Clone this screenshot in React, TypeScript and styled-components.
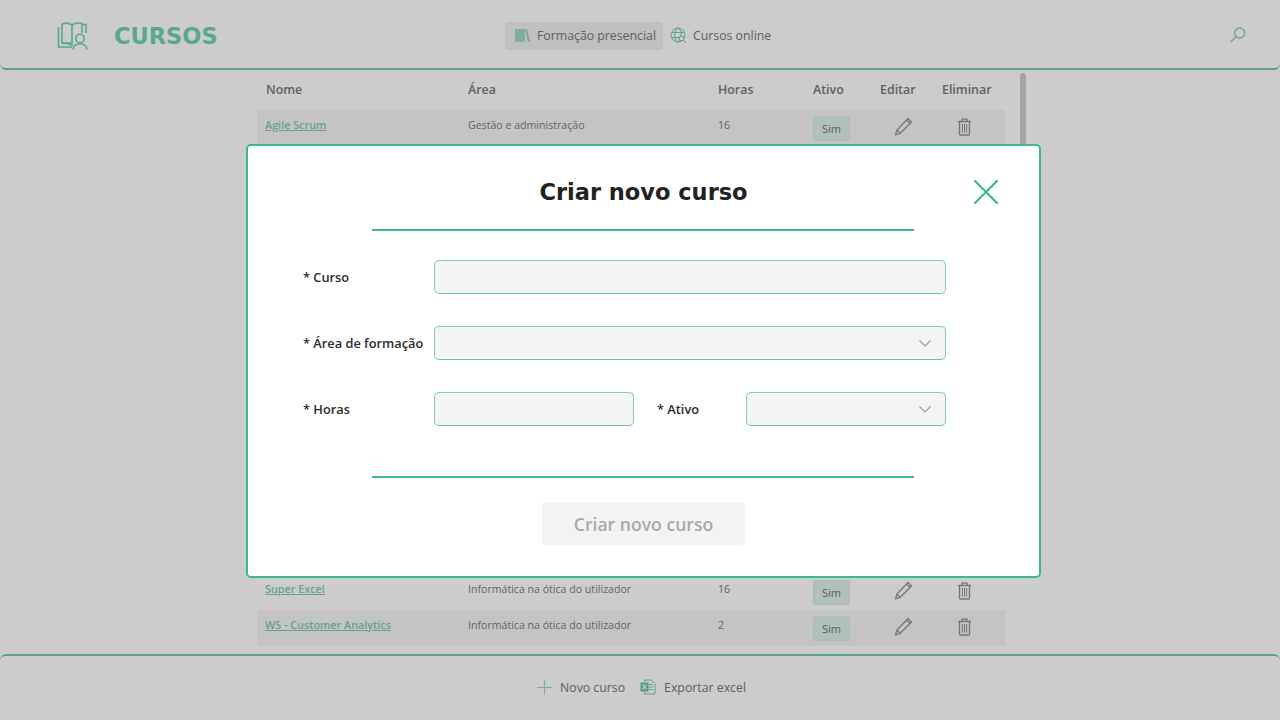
import React from "react";
import styled, { createGlobalStyle } from "styled-components";

const Global = createGlobalStyle`
  html, body { margin: 0; padding: 0; height: 100%; overflow: hidden; background: #fff; }
  * { box-sizing: border-box; }
  body { font-family: "Open Sans", "Noto Sans", sans-serif; }
`;

const Page = styled.div`
  width: 1280px;
  height: 720px;
  display: flex;
  flex-direction: column;
  background: #fff;
`;

const Header = styled.header`
  height: 70px;
  flex: none;
  display: grid;
  grid-template-columns: 505px auto 1fr;
  align-items: center;
  padding-top: 3px;
  border-bottom: 2px solid #79c9ab;
  border-radius: 0 0 6px 6px;
`;

const Brand = styled.div`
  display: flex;
  align-items: center;
  padding-left: 57px;
  gap: 25px;
`;

const BrandTitle = styled.h1`
  margin: 0;
  font-family: "DejaVu Sans", sans-serif;
  font-weight: 700;
  font-size: 22.5px;
  color: #70d2ae;
`;

const Nav = styled.nav`
  display: flex;
  align-items: center;
  gap: 7px;
`;

const NavItem = styled.a<{ $active?: boolean }>`
  display: flex;
  align-items: center;
  gap: ${(p) => (p.$active ? 7 : 6)}px;
  height: 28px;
  padding: 0 ${(p) => (p.$active ? "7px 0 10px" : "6px 0 0")};
  border-radius: 3px;
  font-size: 12.3px;
  color: #777;
  background: ${(p) => (p.$active ? "#f0f0f0" : "transparent")};
`;

const SearchSlot = styled.div`
  display: flex;
  justify-content: flex-end;
  padding: 0 33px 1px 0;
`;

const Main = styled.main`
  flex: 1;
  display: flex;
  padding-left: 257px;
  min-height: 0;
`;

const Table = styled.div`
  width: 748px;
  display: flex;
  flex-direction: column;
`;

const columns = "grid-template-columns: 203px 250px 95px 67px 62px 1fr;";

const HeadRow = styled.div`
  display: grid;
  ${columns}
  height: 40px;
  padding: 0 0 2px 8px;
  align-items: center;
  font-size: 12.4px;
  font-weight: 600;
  color: #7a7a7a;
`;

const HeadName = styled.span`
  padding-left: 1px;
`;

const Row = styled.div<{ $shaded?: boolean }>`
  display: grid;
  ${columns}
  height: 36px;
  padding-left: 8px;
  align-items: center;
  font-size: 10.6px;
  color: #7d7d7d;
  background: ${(p) => (p.$shaded ? "#f5f5f5" : "transparent")};
`;

const TextCell = styled.span`
  margin-bottom: 6px;
`;

const HiddenRows = styled.div`
  height: 428px;
  flex: none;
`;

const CourseLink = styled.a`
  margin-bottom: 8px;
  color: #7ccdb0;
  font-size: 10.8px;
  font-weight: 600;
  text-decoration: underline;
`;

const Badge = styled.span`
  justify-self: start;
  width: 37px;
  height: 25px;
  display: flex;
  align-items: center;
  justify-content: center;
  background: #dcf2ec;
  border: 1px solid #d4ebe4;
  border-radius: 2px;
  font-size: 11px;
  color: #707070;
`;

const EditCell = styled.span`
  display: flex;
  padding-left: 14px;
  margin-bottom: 3px;
`;

const DeleteCell = styled.span`
  display: flex;
  padding-left: 15px;
  margin-bottom: 3px;
`;

const Scrollbar = styled.div`
  width: 6px;
  height: 100px;
  margin: 3px 0 0 15px;
  border-radius: 3px;
  background: #cdcdcd;
`;

const Footer = styled.footer`
  height: 66px;
  flex: none;
  display: flex;
  align-items: center;
  justify-content: center;
  gap: 15px;
  padding: 0 0 2px 3px;
  border-top: 2px solid #79c9ab;
  border-radius: 6px 6px 0 0;
`;

const FooterAction = styled.a`
  display: flex;
  align-items: center;
  gap: 8px;
  font-size: 12.3px;
  color: #777;
`;

const Overlay = styled.div`
  position: fixed;
  inset: 0;
  background: rgba(0, 0, 0, 0.2);
  display: flex;
  align-items: flex-start;
  justify-content: flex-start;
  padding: 144px 0 0 246px;
`;

const Modal = styled.section`
  position: relative;
  width: 795px;
  height: 434px;
  background: #fff;
  border: 2px solid #3cb88e;
  border-radius: 5px;
  display: flex;
  flex-direction: column;
  align-items: center;
`;

const ModalTitle = styled.h2`
  margin: 31px 0 0 0;
  height: 30px;
  line-height: 30px;
  font-family: "DejaVu Sans", sans-serif;
  font-size: 22.5px;
  font-weight: 700;
  color: #222;
`;

const CloseButton = styled.button`
  position: absolute;
  top: 32px;
  right: 39px;
  width: 28px;
  height: 28px;
  padding: 0;
  border: 0;
  background: none;
  display: flex;
`;

const Divider = styled.hr<{ $top: number }>`
  width: 542px;
  height: 2px;
  margin: ${(p) => p.$top}px 0 0 -2px;
  border: 0;
  flex: none;
  background: #3cb88e;
`;

const Form = styled.form`
  align-self: flex-start;
  margin: 29px 0 0 55px;
  width: 643px;
  display: flex;
  flex-direction: column;
  gap: 32px;
`;

const FieldRow = styled.div`
  display: flex;
  align-items: center;
  height: 34px;
`;

const Label = styled.label<{ $width: number; $indent?: number }>`
  flex: none;
  width: ${(p) => p.$width}px;
  padding-left: ${(p) => p.$indent ?? 0}px;
  font-size: 12.8px;
  font-weight: 600;
  color: #2b2b2b;
  white-space: nowrap;
`;

const TextField = styled.input<{ $width?: number }>`
  width: ${(p) => (p.$width ? `${p.$width}px` : "100%")};
  flex: ${(p) => (p.$width ? "none" : 1)};
  height: 34px;
  background: #f4f4f4;
  border: 1px solid #7dd0b3;
  border-bottom-color: #68c2a3;
  border-radius: 5px;
  outline: 0;
`;

const SelectField = styled.div<{ $width?: number }>`
  width: ${(p) => (p.$width ? `${p.$width}px` : "auto")};
  flex: ${(p) => (p.$width ? "none" : 1)};
  height: 34px;
  background: #f4f4f4;
  border: 1px solid #7dd0b3;
  border-bottom-color: #68c2a3;
  border-radius: 5px;
  display: flex;
  align-items: center;
  justify-content: flex-end;
  padding-right: 14px;
`;

const SubmitButton = styled.button`
  margin: 24px 0 0 0;
  width: 203px;
  height: 43px;
  flex: none;
  border: 0;
  border-radius: 4px;
  background: #f3f3f3;
  color: #a9a9a9;
  font-family: inherit;
  font-size: 17.6px;
  font-weight: 600;
`;

const LogoIcon = () => (
  <svg width="32" height="28" viewBox="0 0 32 28" fill="none" stroke="#70d2ae" strokeWidth="1.6">
    <path d="M5 2V21H14" />
    <path d="M1.5 5V25H15" />
    <path d="M5 2C8 0.8 12 1 15 3V23C12 21.5 8 21 5 21" />
    <path d="M15 3C18 1 22 0.8 25 1.5V11" />
    <path d="M25 2.5H29V11" />
    <circle cx="23" cy="16.5" r="4.2" />
    <path d="M16 27.5C16.5 24 19 21.8 23 21.8S29.5 24 30 27.5" />
  </svg>
);

const BooksIcon = () => (
  <svg width="15" height="13" viewBox="0 0 15 13" fill="#9bdacb" stroke="#82c8b6" strokeWidth="0.5">
    <rect x="0.5" y="0.5" width="2.6" height="12" />
    <rect x="4" y="0.5" width="2.6" height="12" />
    <rect x="7.5" y="0.5" width="2" height="12" />
    <path d="M10.4 0.8L11.8 0.5L14.6 12.2L13.2 12.5Z" />
  </svg>
);

const GlobeIcon = () => (
  <svg width="17" height="17" viewBox="0 0 17 17" fill="none" stroke="#78cdad" strokeWidth="1">
    <circle cx="8" cy="8" r="7" />
    <ellipse cx="8" cy="8" rx="3.2" ry="7" />
    <path d="M1.5 5.5H14.5M1.5 10.5H9" />
    <circle cx="11.5" cy="11.5" r="2.4" fill="#fff" stroke="#6ab4c4" />
    <path d="M13.3 13.3L16 16" stroke="#6ab4c4" />
  </svg>
);

const SearchIcon = () => (
  <svg width="18" height="18" viewBox="0 0 18 18" fill="none" stroke="#8fd3c0" strokeWidth="1.5">
    <circle cx="10.7" cy="7" r="5" />
    <path d="M7 10.7L1.5 16.2" />
  </svg>
);

const PencilIcon = () => (
  <svg width="19" height="19" viewBox="0 0 19 19" fill="none" stroke="#929292" strokeWidth="1.2" strokeLinejoin="round">
    <path d="M14 1.5L17.5 5L6 16.5L1.5 18L3 13Z" />
    <path d="M12.5 3L16 6.5" />
    <path d="M3 13L6 16.5" />
  </svg>
);

const TrashIcon = () => (
  <svg width="15" height="18" viewBox="0 0 15 18" fill="none" stroke="#929292" strokeWidth="1.3">
    <path d="M1 3.5H14" />
    <path d="M5 3.5V1.2H10V3.5" />
    <path d="M2.5 3.5V16C2.5 16.6 3 17 3.5 17H11.5C12 17 12.5 16.6 12.5 16V3.5" />
    <path d="M5.4 6V14.6M7.5 6V14.6M9.6 6V14.6" strokeWidth="1" />
  </svg>
);

const PlusIcon = () => (
  <svg width="15" height="15" viewBox="0 0 15 15" stroke="#9ddcc5" strokeWidth="1.2">
    <path d="M7.5 0V15M0 7.5H15" />
  </svg>
);

const ExcelIcon = () => (
  <svg width="16" height="16" viewBox="0 0 16 16" fill="none">
    <path d="M4.5 2.5V1H11L15 4.5V15H4.5V13" stroke="#77c9a9" />
    <path d="M8.5 5.5H13M8.5 8H13M8.5 10.5H13" stroke="#77c9a9" />
    <rect x="0.5" y="3.5" width="8" height="9" fill="#6cc4a0" />
    <path d="M2.5 5.6L6.5 10.4M6.5 5.6L2.5 10.4" stroke="#fff" strokeWidth="1.1" />
  </svg>
);

const CloseIcon = () => (
  <svg width="28" height="28" viewBox="0 0 28 28" stroke="#3cb88e" strokeWidth="2.2" strokeLinecap="round">
    <path d="M3 3L25 25M25 3L3 25" />
  </svg>
);

const Chevron = () => (
  <svg width="12" height="7" viewBox="0 0 12 7" fill="none" stroke="#9a9a9a" strokeWidth="1.1">
    <path d="M0.5 0.5L6 6L11.5 0.5" />
  </svg>
);

type Course = { name: string; area: string; hours: string; shaded?: boolean };

const courses: Course[] = [
  { name: "Agile Scrum", area: "Gestão e administração", hours: "16", shaded: true },
];
const lastCourses: Course[] = [
  { name: "Super Excel", area: "Informática na ótica do utilizador", hours: "16" },
  { name: "WS - Customer Analytics", area: "Informática na ótica do utilizador", hours: "2", shaded: true },
];

const CourseRow = ({ name, area, hours, shaded }: Course) => (
  <Row $shaded={shaded}>
    <CourseLink>{name}</CourseLink>
    <TextCell>{area}</TextCell>
    <TextCell>{hours}</TextCell>
    <Badge>Sim</Badge>
    <EditCell><PencilIcon /></EditCell>
    <DeleteCell><TrashIcon /></DeleteCell>
  </Row>
);

export default function App() {
  return (
    <>
      <Global />
      <Page>
        <Header>
          <Brand>
            <LogoIcon />
            <BrandTitle>CURSOS</BrandTitle>
          </Brand>
          <Nav>
            <NavItem $active><BooksIcon />Formação presencial</NavItem>
            <NavItem><GlobeIcon />Cursos online</NavItem>
          </Nav>
          <SearchSlot><SearchIcon /></SearchSlot>
        </Header>
        <Main>
          <Table>
            <HeadRow>
              <HeadName>Nome</HeadName>
              <span>Área</span>
              <span>Horas</span>
              <span>Ativo</span>
              <span>Editar</span>
              <span>Eliminar</span>
            </HeadRow>
            {courses.map((c) => <CourseRow key={c.name} {...c} />)}
            <HiddenRows />
            {lastCourses.map((c) => <CourseRow key={c.name} {...c} />)}
          </Table>
          <Scrollbar />
        </Main>
        <Footer>
          <FooterAction><PlusIcon />Novo curso</FooterAction>
          <FooterAction><ExcelIcon />Exportar excel</FooterAction>
        </Footer>
      </Page>
      <Overlay>
        <Modal>
          <ModalTitle>Criar novo curso</ModalTitle>
          <CloseButton type="button" aria-label="Fechar"><CloseIcon /></CloseButton>
          <Divider $top={22} />
          <Form>
            <FieldRow>
              <Label $width={131}>* Curso</Label>
              <TextField />
            </FieldRow>
            <FieldRow>
              <Label $width={131}>* Área de formação</Label>
              <SelectField><Chevron /></SelectField>
            </FieldRow>
            <FieldRow>
              <Label $width={131}>* Horas</Label>
              <TextField $width={200} />
              <Label $width={112} $indent={23}>* Ativo</Label>
              <SelectField $width={200}><Chevron /></SelectField>
            </FieldRow>
          </Form>
          <Divider $top={50} />
          <SubmitButton type="button">Criar novo curso</SubmitButton>
        </Modal>
      </Overlay>
    </>
  );
}
